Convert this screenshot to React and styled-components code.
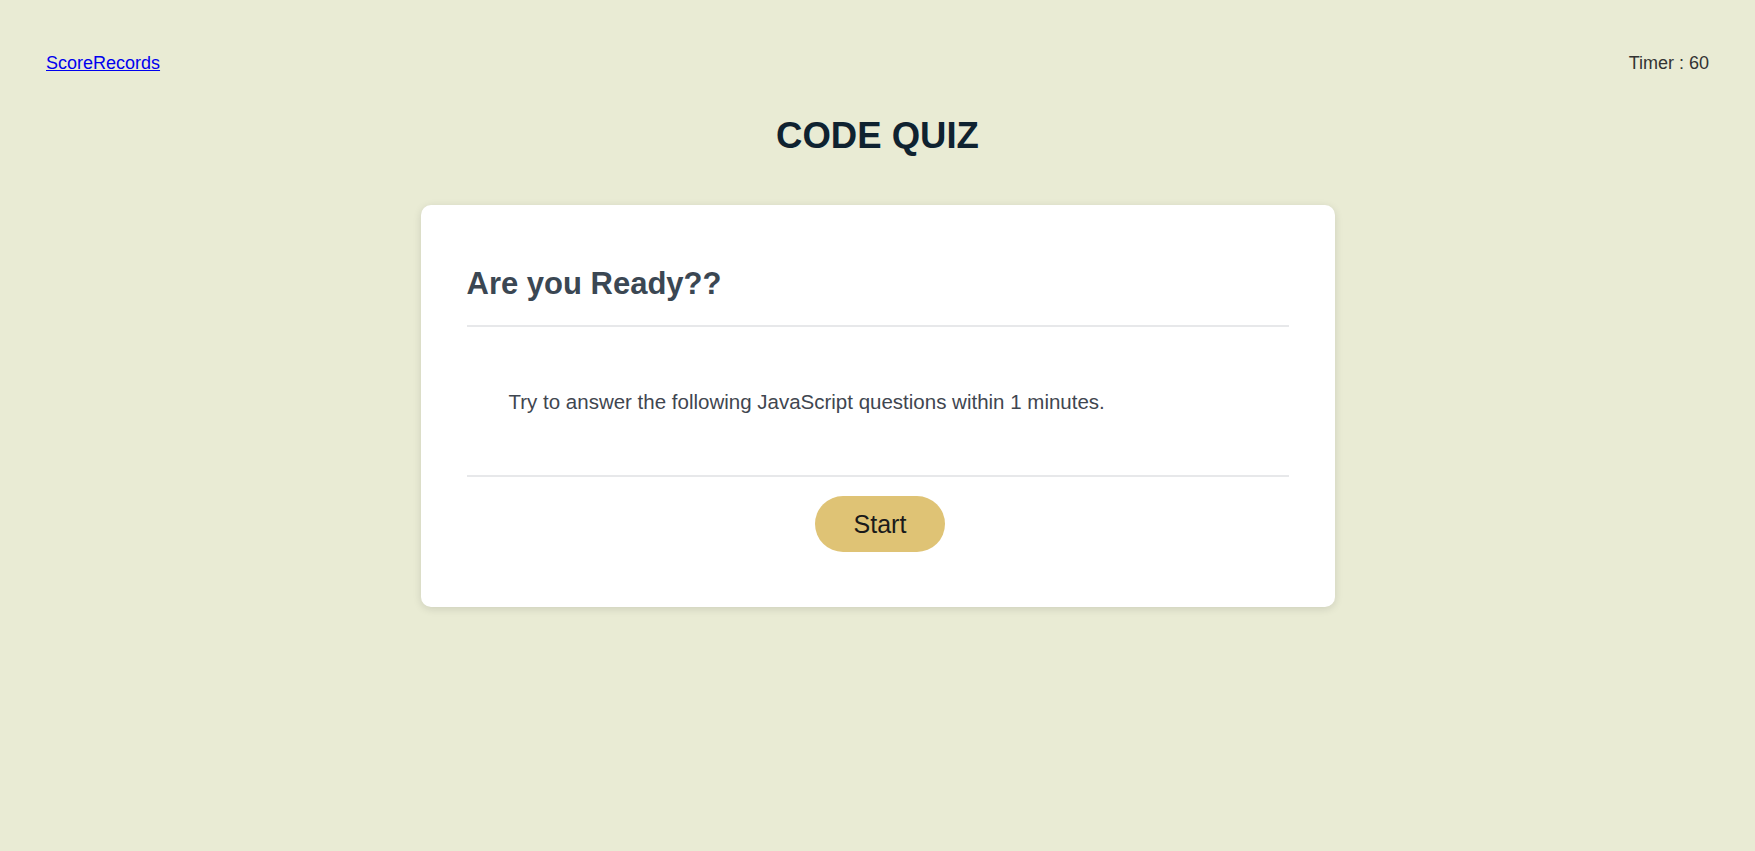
import React from "react";
import styled, { createGlobalStyle } from "styled-components";

const GlobalStyle = createGlobalStyle`
  html, body {
    margin: 0;
    padding: 0;
    background: #e9ebd4;
    font-family: "Liberation Sans", Arial, sans-serif;
  }
`;

const Page = styled.div`
  min-height: 100vh;
  background: #e9ebd4;
`;

const TopBar = styled.header`
  display: flex;
  justify-content: space-between;
  align-items: center;
  padding: 53px 46px 0 46px;
  font-size: 18px;
  line-height: 21px;
`;

const RecordsLink = styled.a`
  color: #0000ee;
  text-decoration: underline;
`;

const Timer = styled.span`
  color: #333;
`;

const Title = styled.h1`
  margin: 41px 0 49px 0;
  text-align: center;
  font-size: 36.5px;
  line-height: 41px;
  font-weight: 700;
  color: #0f2230;
`;

const Card = styled.section`
  width: 914px;
  margin: 0 auto;
  box-sizing: border-box;
  padding: 61px 46px 55px 46px;
  background: #fff;
  border-radius: 10px;
  box-shadow: 0 2px 8px rgba(0, 0, 0, 0.12);
`;

const CardTitle = styled.h2`
  margin: 0;
  padding-bottom: 23px;
  font-size: 31px;
  line-height: 36px;
  font-weight: 700;
  color: #3b4753;
  border-bottom: 2px solid #e7e8ea;
`;

const Intro = styled.p`
  margin: 0;
  padding: 63px 42px 62px 42px;
  font-size: 20.5px;
  line-height: 23px;
  color: #3f4650;
  border-bottom: 2px solid #e7e8ea;
`;

const Actions = styled.div`
  display: flex;
  justify-content: center;
  padding: 19px 0 0 5px;
`;

const StartButton = styled.button`
  border: none;
  border-radius: 999px;
  background: #dfc375;
  color: #1a1a1a;
  font-family: "Liberation Sans", Arial, sans-serif;
  font-size: 25px;
  line-height: 28px;
  padding: 14px 39px;
  cursor: pointer;
`;

const App = () => {
  return (
    <Page>
      <GlobalStyle />
      <TopBar>
        <RecordsLink href="#">ScoreRecords</RecordsLink>
        <Timer>Timer : 60</Timer>
      </TopBar>
      <Title>CODE QUIZ</Title>
      <Card>
        <CardTitle>Are you Ready??</CardTitle>
        <Intro>Try to answer the following JavaScript questions within 1 minutes.</Intro>
        <Actions>
          <StartButton>Start</StartButton>
        </Actions>
      </Card>
    </Page>
  );
};

export default App;
